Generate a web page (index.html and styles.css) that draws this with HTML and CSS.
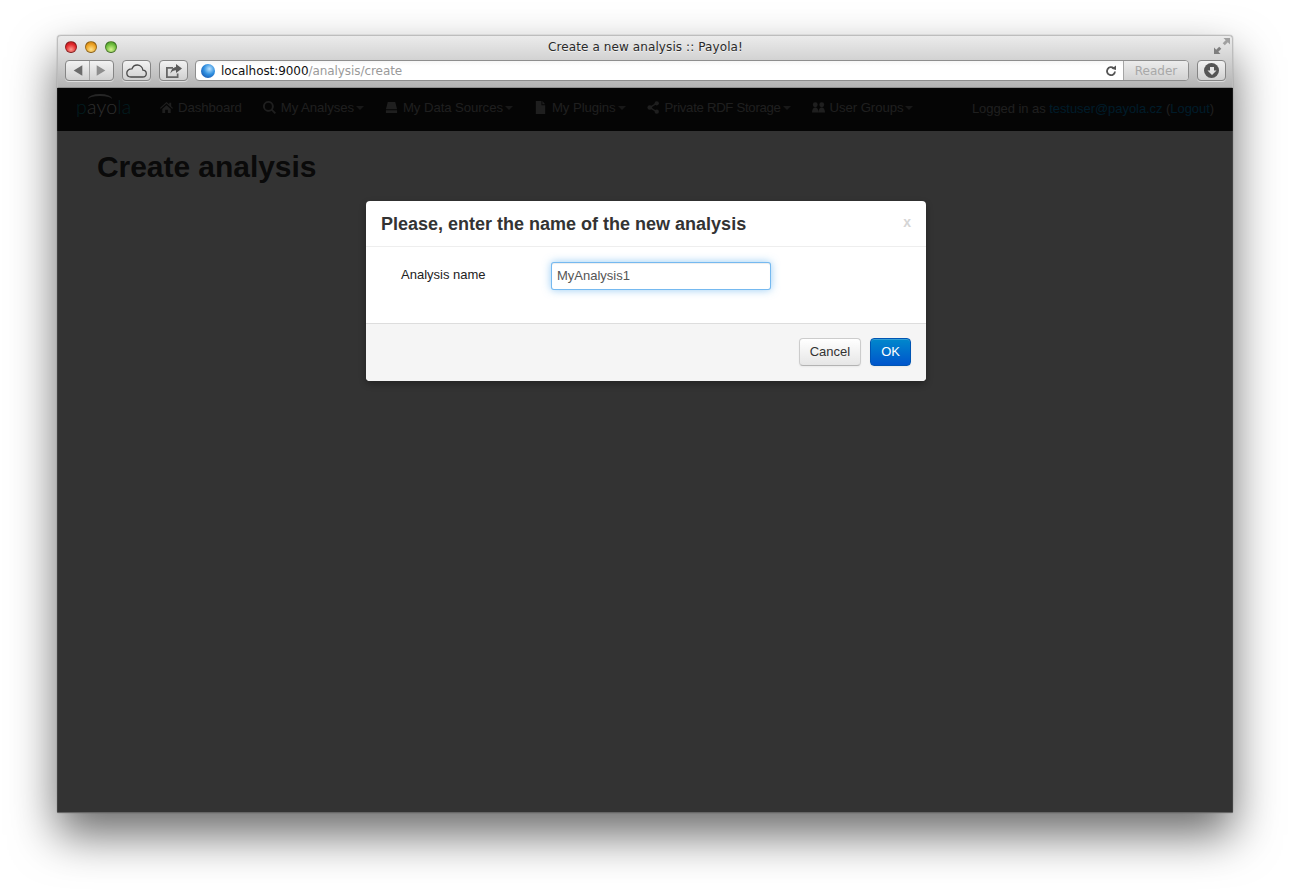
FILE: index.html
```html
<!DOCTYPE html>
<html lang="en">
<head>
  <meta charset="UTF-8">
  <title>Create a new analysis :: Payola!</title>
  <link rel="stylesheet" href="styles.css">
</head>
<body>
  <div class="window">
    <div class="chrome">
      <div class="title-row">
        <div class="lights">
          <span class="light red"></span>
          <span class="light yellow"></span>
          <span class="light green"></span>
        </div>
        <div class="title">Create a new analysis :: Payola!</div>
        <svg class="expand" width="16" height="16" viewBox="0 0 16 16"><path d="M9.500 0H16v6.500l-2.200-2.200-3 3-2.100-2.100 3-3z" fill="#a0a0a0"/><path d="M6.500 16H0V9.500l2.200 2.200 3-3 2.100 2.100-3 3z" fill="#7e7e7e"/></svg>
      </div>
      <div class="tool-row">
        <div class="tool-btn nav-pair">
          <svg width="24" height="19" viewBox="0 0 24 19"><path d="M8 9.500l9-5.500v11z" fill="#6b6b6b"/></svg>
          <span class="divider"></span>
          <svg width="24" height="19" viewBox="0 0 24 19"><path d="M16 9.500l-9-5.500v11z" fill="#8e8e8e"/></svg>
        </div>
        <div class="tool-btn cloud">
          <svg width="21" height="14" viewBox="0 0 21 14"><path d="M5 13h11.500c2.200 0 3.800-1.500 3.800-3.500 0-2-1.500-3.400-3.400-3.400C16.500 3 14 1 11.300 1 8.700 1 6.800 2.500 6 4.800 3 4.600.8 6.500.8 9c0 2.400 1.900 4 4.200 4z" fill="none" stroke="#4a4a4a" stroke-width="1.300"/></svg>
        </div>
        <div class="tool-btn share">
          <svg width="18" height="14" viewBox="0 0 18 14"><path d="M1 3h7v1.800H2.800v7.400h9V9.500H13.500V14H1z" fill="#666"/><path d="M11 0l6 4.500-6 4.500V6.300C8.500 6.300 6.800 7.300 5.500 9.500 5.800 6 8 3.200 11 2.900z" fill="#5a5a5a"/></svg>
        </div>
        <div class="address">
          <span class="globe"></span>
          <span class="url">localhost:9000<span class="url-path">/analysis/create</span></span>
          <svg class="reload" width="12" height="12" viewBox="0 0 12 12"><path d="M10 6.500a4 4 0 1 1-1.300-3.300" fill="none" stroke="#555" stroke-width="1.800"/><path d="M6.500 3.800L11 5V.5z" fill="#555"/></svg>
          <span class="reader">Reader</span>
        </div>
        <div class="tool-btn download">
          <span class="download-disc">
            <svg width="10" height="10" viewBox="0 0 10 10"><path d="M3 1h4v3.500h2.500L5 9 .5 4.500H3z" fill="#e4e4e4"/></svg>
          </span>
        </div>
      </div>
    </div>

    <div class="page">
      <div class="navbar">
        <a class="brand"><span class="brand-arc"></span>p<span class="brand-mid">ayo</span>la</a>
        <ul class="nav">
          <li class="nav-item">
            <svg class="icon" viewBox="0 0 14 14"><path d="M7 1l3 2.800V2h2v3.700L14 7.500l-.8.800L7 2.800.8 8.300 0 7.500zM2.500 8.500L7 4.500l4.500 4V13H8.500V9.500h-3V13h-3z"/></svg>
            Dashboard
          </li>
          <li class="nav-item">
            <svg class="icon" viewBox="0 0 14 14"><path d="M5.800 0a5.800 5.800 0 0 1 4.700 9.200L14 12.600 12.600 14 9.200 10.500A5.800 5.800 0 1 1 5.800 0zm0 2a3.800 3.800 0 1 0 0 7.600 3.800 3.800 0 0 0 0-7.600z"/></svg>
            My Analyses<span class="caret"></span>
          </li>
          <li class="nav-item">
            <svg class="icon" viewBox="0 0 14 14"><path d="M3 1h8l2 8H1zM1 10h12v3H1z"/></svg>
            My Data Sources<span class="caret"></span>
          </li>
          <li class="nav-item">
            <svg class="icon" viewBox="0 0 14 14"><path d="M2 0h6v4.500h4V14H2zM9 0l3 3.500H9z"/></svg>
            My Plugins<span class="caret"></span>
          </li>
          <li class="nav-item nav-item-tight">
            <svg class="icon" viewBox="0 0 14 14"><circle cx="3" cy="7" r="2.500"/><circle cx="10.500" cy="2.500" r="2.300"/><circle cx="10.500" cy="11.500" r="2.300"/><path d="M3 6.300l7-4.500.8 1.200-7 4.500zM3 7.700l7 4.500.8-1.200-7-4.500z"/></svg>
            Private RDF Storage<span class="caret"></span>
          </li>
          <li class="nav-item">
            <svg class="icon" viewBox="0 0 14 14"><circle cx="3.500" cy="4" r="2.600"/><circle cx="10.500" cy="4" r="2.600"/><path d="M0 12.500c0-3.500 1.500-5.500 3.500-5.500S7 9 7 12.500zM7 12.500C7 9 8.500 7 10.500 7S14 9 14 12.500z"/></svg>
            User Groups<span class="caret"></span>
          </li>
        </ul>
        <div class="login">Logged in as <a>testuser@payola.cz</a> (<a>Logout</a>)</div>
      </div>
      <div class="content">
        <h1>Create analysis</h1>
      </div>

      <div class="backdrop"></div>

      <div class="modal">
        <div class="modal-header">
          <h3>Please, enter the name of the new analysis</h3>
          <span class="close">x</span>
        </div>
        <div class="modal-body">
          <label class="field-label" for="analysis-name">Analysis name</label>
          <input class="field-input" id="analysis-name" type="text" value="MyAnalysis1">
        </div>
        <div class="modal-footer">
          <button class="btn">Cancel</button>
          <button class="btn btn-primary">OK</button>
        </div>
      </div>
    </div>
  </div>
</body>
</html>
```

FILE: styles.css
```css
* {
  box-sizing: border-box;
}

html, body {
  height: 892px;
  overflow: hidden;
}

body {
  margin: 0;
  padding: 35px 57px 0;
  background-color: #fff;
  font-family: "Liberation Sans", Arial, sans-serif;
  font-size: 14px;
  color: #333;
}

.window {
  display: flex;
  flex-direction: column;
  height: 778px;
  border-radius: 4px 4px 2px 2px;
  box-shadow: 0 22px 46px rgba(0, 0, 0, 0.58), 0 0 1px rgba(0, 0, 0, 0.6);
}

/* browser chrome */
.chrome {
  height: 53px;
  flex: none;
  padding: 0 6px 0 7px;
  border: 1px solid #bdbdbd;
  border-bottom: 1px solid #8f8f8f;
  border-radius: 4px 4px 0 0;
  background: linear-gradient(#ebebeb, #d6d6d6 40%, #b4b4b4);
}

.title-row {
  display: grid;
  grid-template-columns: 1fr auto 1fr;
  align-items: center;
  height: 23px;
}

.lights {
  display: flex;
  gap: 8px;
  margin-top: -1px;
}

.light {
  width: 12px;
  height: 12px;
  border-radius: 50%;
  border: 1px solid rgba(0, 0, 0, 0.35);
}

.light.red {
  background: radial-gradient(circle at 50% 75%, #ff9a8f, #e0262a 60%, #a81a1f);
}

.light.yellow {
  background: radial-gradient(circle at 50% 75%, #ffe38a, #eba022 60%, #b57412);
}

.light.green {
  background: radial-gradient(circle at 50% 75%, #d5f58f, #6cbb3c 60%, #3f8a22);
}

.title {
  margin-top: -2px;
  font-family: "DejaVu Sans", sans-serif;
  font-size: 12px;
  letter-spacing: 0.1px;
  color: #2a2a2a;
  text-shadow: 0 1px 0 rgba(255, 255, 255, 0.6);
}

.expand {
  justify-self: end;
  margin-top: -3px;
  margin-right: -4px;
}

.tool-row {
  display: flex;
  align-items: flex-start;
  height: 22px;
  margin-top: 1px;
}

.tool-btn {
  display: flex;
  align-items: center;
  justify-content: center;
  height: 21px;
  border: 1px solid #858585;
  border-radius: 4px;
  background: linear-gradient(#f2f2f2, #d0d0d0);
  box-shadow: 0 1px 0 rgba(255, 255, 255, 0.5);
}

.nav-pair {
  width: 49px;
}

.divider {
  width: 1px;
  height: 19px;
  background-color: #a5a5a5;
}

.cloud {
  width: 29px;
  margin-left: 8px;
}

.share {
  width: 29px;
  margin-left: 8px;
}

.address {
  display: flex;
  align-items: center;
  flex: 1;
  height: 21px;
  margin-left: 7px;
  border: 1px solid #8e8e8e;
  border-radius: 4px;
  background: linear-gradient(#f6f6f6, #fff 25%);
  overflow: hidden;
}

.globe {
  width: 14px;
  height: 14px;
  flex: none;
  margin-left: 5px;
  border-radius: 50%;
  background: radial-gradient(circle at 60% 35%, #b9e2ff, #2f8fe0 45%, #0f3f9a);
}

.url {
  flex: 1;
  margin-left: 6px;
  font-family: "DejaVu Sans", sans-serif;
  font-size: 12px;
  letter-spacing: -0.07px;
  color: #111;
}

.url-path {
  color: #9a9a9a;
}

.reload {
  margin-right: 6px;
}

.reader {
  width: 65px;
  height: 100%;
  border-left: 1px solid #a5a5a5;
  background: linear-gradient(#ececec, #d2d2d2);
  text-align: center;
  font-family: "DejaVu Sans", sans-serif;
  font-size: 12px;
  line-height: 20px;
  color: #a8a8a8;
}

.download {
  width: 29px;
  margin-left: 8px;
}

.download-disc {
  display: flex;
  align-items: center;
  justify-content: center;
  width: 15px;
  height: 15px;
  border-radius: 50%;
  background-color: #555;
}

/* page */
.page {
  position: relative;
  flex: 1;
  background-color: #fff;
}

.navbar {
  display: flex;
  align-items: center;
  height: 43px;
  padding-bottom: 5px;
  background-color: #1b1b1b;
  color: #999;
}

.brand {
  position: relative;
  width: 103px;
  padding-left: 19px;
  font-family: "Lato", sans-serif;
  font-weight: 300;
  font-size: 19.5px;
  line-height: 24px;
  letter-spacing: 0.2px;
  color: #0a8ea0;
}

.brand-mid {
  color: #ddd;
}

.brand-arc {
  position: absolute;
  left: 31px;
  top: -1px;
  width: 24px;
  height: 10px;
  border-top: 2px solid #bbb;
  border-radius: 50%;
}

.nav {
  display: flex;
  flex: 1;
  gap: 21px;
  margin: 0;
  padding: 0;
  list-style: none;
  font-size: 13.2px;
  letter-spacing: -0.08px;
}

.nav-item {
  display: flex;
  align-items: center;
}

.nav-item-tight {
  letter-spacing: -0.3px;
}

.icon {
  width: 13px;
  height: 13px;
  margin-right: 5px;
  fill: #999;
}

.caret {
  width: 0;
  height: 0;
  margin-left: 2px;
  margin-top: 1px;
  border-left: 4px solid transparent;
  border-right: 4px solid transparent;
  border-top: 4px solid #777;
}

.login {
  margin-right: 19px;
  padding-top: 2px;
  font-size: 13px;
  letter-spacing: -0.06px;
}

.login a {
  color: #08c;
}

.content {
  padding: 0 40px;
}

h1 {
  margin: 16px 0 0;
  font-size: 30px;
  line-height: 40px;
  letter-spacing: -0.05px;
  color: #333;
}

.backdrop {
  position: absolute;
  top: 0;
  left: 0;
  right: 0;
  bottom: 0;
  background-color: rgba(0, 0, 0, 0.8);
  box-shadow: inset 0 -1px 0 rgba(255, 255, 255, 0.25), inset 1px 0 0 rgba(255, 255, 255, 0.08), inset -1px 0 0 rgba(255, 255, 255, 0.08);
}

.modal {
  position: absolute;
  top: 113px;
  left: 309px;
  width: 560px;
  height: 180px;
  display: flex;
  flex-direction: column;
  border-radius: 4px;
  background-color: #fff;
  box-shadow: 0 3px 7px rgba(0, 0, 0, 0.3);
  overflow: hidden;
}

.modal-header {
  display: flex;
  align-items: center;
  justify-content: space-between;
  height: 46px;
  padding: 2px 15px 0;
  border-bottom: 1px solid #eee;
}

h3 {
  margin: 0;
  font-size: 18px;
  color: #333;
}

.close {
  margin-top: -5px;
  font-size: 14px;
  font-weight: bold;
  color: #d5d5d5;
}

.modal-body {
  display: flex;
  align-items: flex-start;
  flex: 1;
  padding: 15px 35px 0;
}

.field-label {
  width: 150px;
  padding-top: 5px;
  font-size: 13px;
  line-height: 16px;
  color: #222;
}

.field-input {
  width: 220px;
  height: 28px;
  padding: 3px 5px 5px;
  border: 1px solid rgba(82, 168, 236, 0.8);
  border-radius: 3px;
  outline: none;
  box-shadow: inset 0 1px 1px rgba(0, 0, 0, 0.075), 0 0 8px rgba(82, 168, 236, 0.6);
  font-family: "Liberation Sans", Arial, sans-serif;
  font-size: 13px;
  color: #555;
}

.modal-footer {
  display: flex;
  justify-content: flex-end;
  gap: 9px;
  height: 58px;
  padding: 14px 15px 0;
  border-top: 1px solid #ddd;
  background-color: #f5f5f5;
}

.btn {
  height: 28px;
  padding: 0 10px 2px;
  border: 1px solid #ccc;
  border-bottom-color: #b3b3b3;
  border-radius: 4px;
  background: linear-gradient(#fff, #e6e6e6);
  box-shadow: inset 0 1px 0 rgba(255, 255, 255, 0.2), 0 1px 2px rgba(0, 0, 0, 0.05);
  font-family: "Liberation Sans", Arial, sans-serif;
  font-size: 13px;
  color: #333;
}

.btn-primary {
  border-color: #0055b3;
  background: linear-gradient(#0088cc, #0055cc);
  color: #fff;
}
```
